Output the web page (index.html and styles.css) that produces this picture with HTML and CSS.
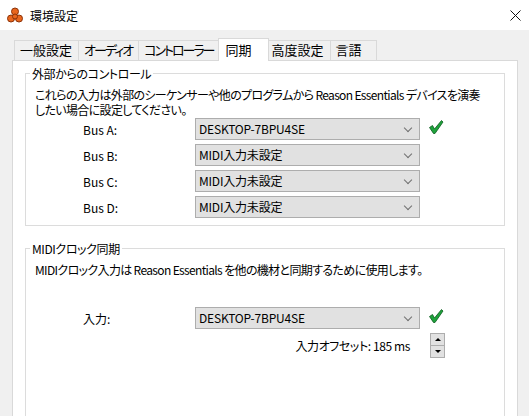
FILE: index.html
```html
<!DOCTYPE html>
<html lang="ja">
<head>
    <meta charset="UTF-8">
    <title>環境設定</title>
    <link rel="stylesheet" href="styles.css">
</head>
<body>
    <div class="titlebar">
        <svg class="app-icon" width="16" height="16" viewBox="0 0 16 16">
            <g fill="#e8661e" stroke="#8c3208" stroke-width="1">
                <circle cx="8" cy="4.5" r="3.5"/>
                <circle cx="4" cy="11.5" r="3.5"/>
                <circle cx="12" cy="11.5" r="3.5"/>
                <circle cx="8" cy="9.5" r="2.5"/>
            </g>
        </svg>
        <span class="title">環境設定</span>
        <svg class="close" width="11" height="11" viewBox="0 0 11 11">
            <path d="M0.5 0.5 L10.5 10.5 M10.5 0.5 L0.5 10.5" stroke="#111" stroke-width="1"/>
        </svg>
    </div>

    <div class="tabs">
        <div class="tab">一般設定</div>
        <div class="tab kana">オーディオ</div>
        <div class="tab kana">コントローラー</div>
        <div class="tab active">同期</div>
        <div class="tab">高度設定</div>
        <div class="tab">言語</div>
    </div>

    <div class="panel">
        <fieldset class="group">
            <legend>外部からのコントロール</legend>
            <p class="desc">これらの入力は外部のシーケンサーや他のプログラムから Reason Essentials デバイスを演奏<br>したい場合に設定してください。</p>
            <div class="rows">
                <span class="label">Bus A:</span>
                <div class="select">DESKTOP-7BPU4SE<span class="chev"></span></div>
                <svg class="check" width="16" height="16" viewBox="0 0 16 16">
                    <path d="M1.5 8.5 L4.5 6.5 L6.5 10 L13.5 1.5 L15 3 L7 14.5 L5.5 14.5 Z" fill="#1fa33c" stroke="#0d5a1e" stroke-width="0.8"/>
                </svg>
                <span class="label">Bus B:</span>
                <div class="select">MIDI入力未設定<span class="chev"></span></div>
                <span></span>
                <span class="label">Bus C:</span>
                <div class="select">MIDI入力未設定<span class="chev"></span></div>
                <span></span>
                <span class="label">Bus D:</span>
                <div class="select">MIDI入力未設定<span class="chev"></span></div>
                <span></span>
            </div>
        </fieldset>

        <fieldset class="group clock">
            <legend>MIDIクロック同期</legend>
            <p class="desc">MIDIクロック入力は Reason Essentials を他の機材と同期するために使用します。</p>
            <div class="rows">
                <span class="label">入力:</span>
                <div class="select">DESKTOP-7BPU4SE<span class="chev"></span></div>
                <svg class="check" width="16" height="16" viewBox="0 0 16 16">
                    <path d="M1.5 8.5 L4.5 6.5 L6.5 10 L13.5 1.5 L15 3 L7 14.5 L5.5 14.5 Z" fill="#1fa33c" stroke="#0d5a1e" stroke-width="0.8"/>
                </svg>
                <span></span>
                <span class="offset">入力オフセット: 185 ms</span>
                <div class="spinner">
                    <div class="spin-btn"><span class="up"></span></div>
                    <div class="spin-btn"><span class="down"></span></div>
                </div>
            </div>
        </fieldset>
    </div>
</body>
</html>
```

FILE: styles.css
```css
* {
    box-sizing: border-box;
}
body {
    margin: 0;
    width: 529px;
    height: 416px;
    overflow: hidden;
    background: #f0f0f0;
    font-family: "Noto Sans CJK JP", sans-serif;
    font-feature-settings: "palt";
    font-size: 12px;
    letter-spacing: -0.4px;
    color: #000;
}
.titlebar {
    height: 30px;
    background: #fff;
    display: flex;
    align-items: center;
    padding-left: 7px;
}
.app-icon {
    margin-right: 7px;
}
.title {
    font-size: 12px;
    letter-spacing: 0;
    flex: 1;
}
.close {
    margin-right: 8px;
}
.tabs {
    height: 30px;
    display: flex;
    align-items: flex-end;
    padding-left: 14px;
}
.tab {
    height: 20px;
    min-width: 47px;
    line-height: 18px;
    padding: 0 6px 0 5px;
    border: 1px solid #d9d9d9;
    border-bottom: none;
    margin-left: -1px;
    font-size: 13px;
    letter-spacing: 0;
}
.tab.kana {
    letter-spacing: -2px;
}
.tab:first-child {
    margin-left: 0;
}
.tab.active {
    height: 23px;
    min-width: 51px;
    line-height: 21px;
    margin: 0 -2px -1px -3px;
    padding: 0 8px 0 7px;
    background: #fff;
    position: relative;
    z-index: 1;
}
.panel {
    margin: 0 11px 0 12px;
    height: 400px;
    background: #fff;
    border: 1px solid #d9d9d9;
    padding: 5px 12px 0 12px;
}
.group {
    margin: 0;
    border: 1px solid #dcdcdc;
    padding: 6px 9px 7px 9px;
    min-width: 0;
}
.group legend {
    padding: 0 2px;
    margin-left: -5px;
    line-height: 15px;
}
.desc {
    margin: 0 0 1px;
    line-height: 15px;
    letter-spacing: -0.65px;
    white-space: nowrap;
}
.rows {
    display: grid;
    grid-template-columns: 104px 225px 16px;
    column-gap: 8px;
    row-gap: 4px;
    padding-left: 48px;
    align-items: center;
}
.label {
    letter-spacing: 0;
}
.select {
    height: 22px;
    background: #e1e1e1;
    border: 1px solid #adadad;
    padding-left: 3px;
    line-height: 20px;
    letter-spacing: -0.2px;
    display: flex;
    justify-content: space-between;
    align-items: center;
}
.chev {
    width: 6px;
    height: 6px;
    border-right: 1px solid #707070;
    border-bottom: 1px solid #707070;
    transform: rotate(45deg);
    margin: 0 8px 3px 0;
}
.check {
    margin-top: -4px;
}
.clock {
    margin-top: 15px;
    height: 200px;
}
.clock .desc {
    margin-bottom: 30px;
}
.offset {
    text-align: right;
    padding-right: 10px;
}
.spinner {
    margin-left: 2px;
    width: 15px;
    border: 1px solid #adadad;
    background: #adadad;
    display: flex;
    flex-direction: column;
    gap: 1px;
}
.spin-btn {
    height: 11px;
    background: #e1e1e1;
    display: flex;
    align-items: center;
    justify-content: center;
}
.up {
    border-left: 3px solid transparent;
    border-right: 3px solid transparent;
    border-bottom: 3px solid #000;
}
.down {
    border-left: 3px solid transparent;
    border-right: 3px solid transparent;
    border-top: 3px solid #000;
}
```
